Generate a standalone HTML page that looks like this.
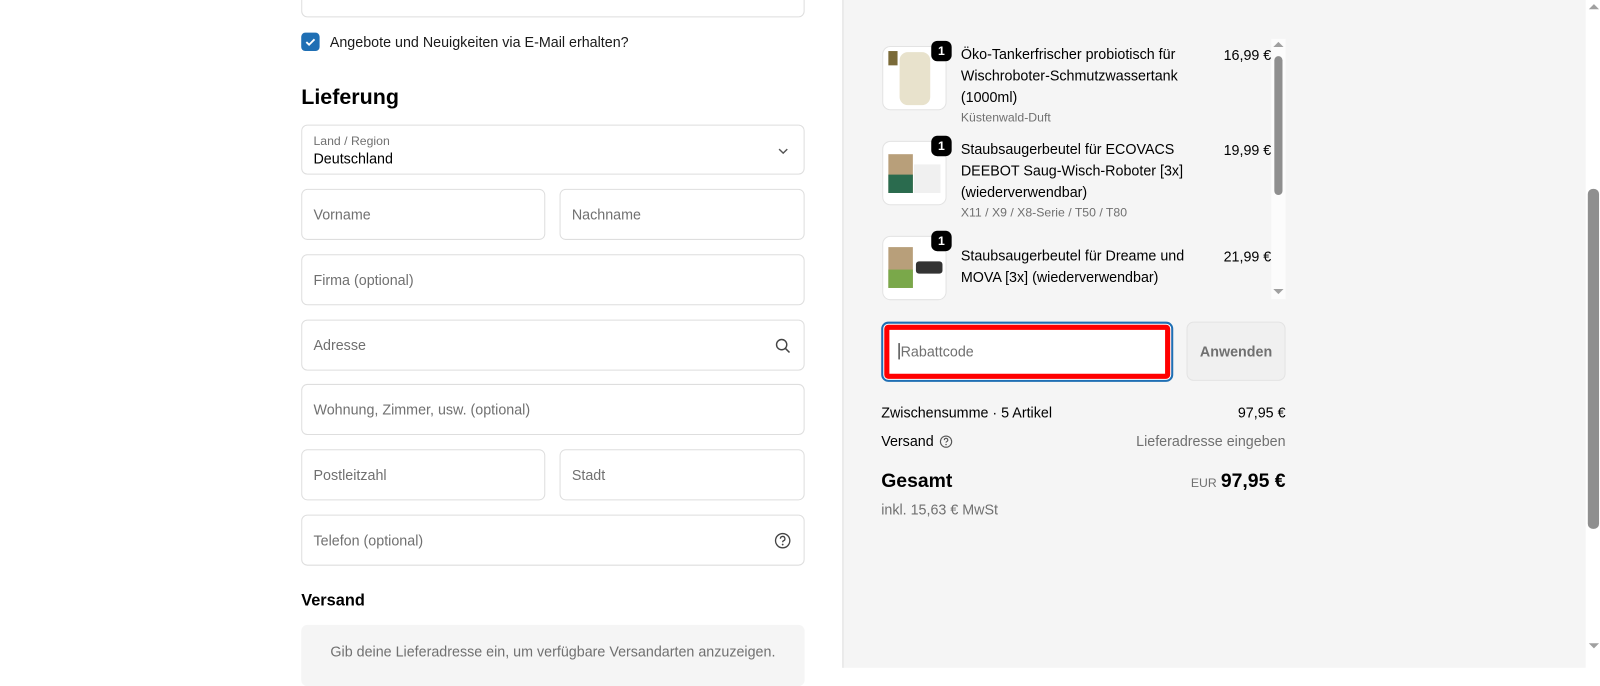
<!DOCTYPE html>
<html><head><meta charset="utf-8">
<style>
*{box-sizing:border-box;margin:0;padding:0}
html,body{width:1600px;height:654px;overflow:hidden;background:#fff}
#wrap{position:absolute;left:0;top:0;width:1567px;height:641px;transform:scale(1.0211);transform-origin:0 0;font-family:"Liberation Sans",sans-serif;color:#000}
.abs{position:absolute}
.field{position:absolute;border:1px solid #dedede;border-radius:6px;background:#fff;font-size:14px;color:#707070;padding-left:11px;display:flex;align-items:center}
.right{position:absolute;left:825px;top:0;width:728px;height:654px;background:#f5f5f5;border-left:1px solid #dedede}
.thumb{position:absolute;left:864px;width:63px;height:63px;border-radius:8px;background:#fff;border:1px solid #e3e3e3;overflow:hidden}
.badge{position:absolute;width:20px;height:20px;border-radius:6px;background:#000;color:#fff;font-size:12px;font-weight:bold;text-align:center;line-height:20px}
.pt{position:absolute;left:941px;font-size:14px;line-height:21px;width:250px}
.pr{position:absolute;left:1160px;width:85px;text-align:right;font-size:14px}
.sub{font-size:12px;color:#707070;line-height:18px}
</style></head><body><div id="wrap">
<div class="field" style="left:295px;top:-30px;width:493px;height:47px"></div>
<div class="abs" style="left:295px;top:32px;width:18px;height:18px;border-radius:4px;background:#1f6fb4"><svg width="18" height="18"><path d="M5 9.2l2.7 2.6L13 6.5" stroke="#fff" stroke-width="1.8" fill="none"/></svg></div>
<div class="abs" style="left:323px;top:33px;font-size:14px;color:#1a1a1a">Angebote und Neuigkeiten via E-Mail erhalten?</div>
<div class="abs" style="left:295px;top:84px;font-size:21px;font-weight:bold">Lieferung</div>
<div class="field" style="left:295px;top:122px;width:493px;height:49px;display:block;padding-top:8px">
 <div style="font-size:12px;color:#707070">Land / Region</div>
 <div style="font-size:14px;color:#000;margin-top:2px">Deutschland</div>
 <svg class="abs" style="right:14px;top:19px" width="12" height="12"><path d="M2 4l4 4 4-4" stroke="#555" stroke-width="1.4" fill="none"/></svg>
</div>
<div class="field" style="left:295px;top:185px;width:239px;height:50px">Vorname</div>
<div class="field" style="left:548px;top:185px;width:240px;height:50px">Nachname</div>
<div class="field" style="left:295px;top:249px;width:493px;height:50px">Firma (optional)</div>
<div class="field" style="left:295px;top:313px;width:493px;height:50px">Adresse
 <svg class="abs" style="right:12px;top:17px" width="16" height="16"><circle cx="6.5" cy="6.5" r="5" stroke="#444" stroke-width="1.4" fill="none"/><path d="M10.2 10.2l4 4" stroke="#444" stroke-width="1.5"/></svg></div>
<div class="field" style="left:295px;top:376px;width:493px;height:50px">Wohnung, Zimmer, usw. (optional)</div>
<div class="field" style="left:295px;top:440px;width:239px;height:50px">Postleitzahl</div>
<div class="field" style="left:548px;top:440px;width:240px;height:50px">Stadt</div>
<div class="field" style="left:295px;top:504px;width:493px;height:50px">Telefon (optional)
 <svg class="abs" style="right:12px;top:16px" width="17" height="17"><circle cx="8.5" cy="8.5" r="7" stroke="#444" stroke-width="1.3" fill="none"/><path d="M6.3 6.6a2.2 2.2 0 1 1 3 2c-.6.3-.8.7-.8 1.4" stroke="#444" stroke-width="1.3" fill="none"/><circle cx="8.5" cy="12.3" r=".9" fill="#444"/></svg></div>
<div class="abs" style="left:295px;top:580px;font-size:16px;font-weight:bold">Versand</div>
<div class="abs" style="left:295px;top:612px;width:493px;height:60px;background:#f5f5f5;border-radius:6px;font-size:14px;color:#707070;text-align:center;padding-top:18px">Gib deine Lieferadresse ein, um verfügbare Versandarten anzuzeigen.</div>
<div class="right"></div>
<div class="thumb" style="top:45px"><div class="abs" style="left:16px;top:5px;width:30px;height:52px;border-radius:8px;background:#e8e2cc"></div><div class="abs" style="left:5px;top:4px;width:9px;height:14px;background:#7a6a38"></div></div>
<div class="thumb" style="top:138px"><div class="abs" style="left:5px;top:12px;width:24px;height:38px;background:#b89f7a"></div><div class="abs" style="left:5px;top:32px;width:24px;height:18px;background:#2a6b4e"></div><div class="abs" style="left:30px;top:22px;width:26px;height:28px;background:#f0f0f0"></div></div>
<div class="thumb" style="top:231px"><div class="abs" style="left:5px;top:10px;width:24px;height:40px;background:#b89f7a"></div><div class="abs" style="left:5px;top:32px;width:24px;height:18px;background:#7aa84a"></div><div class="abs" style="left:32px;top:24px;width:26px;height:12px;background:#333;border-radius:3px"></div></div>
<div class="badge" style="left:912px;top:40px">1</div>
<div class="badge" style="left:912px;top:133px">1</div>
<div class="badge" style="left:912px;top:226px">1</div>
<div class="pt" style="top:43px">Öko-Tankerfrischer probiotisch für Wischroboter-Schmutzwassertank (1000ml)<div class="sub">Küstenwald-Duft</div></div>
<div class="pr" style="top:46px">16,99 €</div>
<div class="pt" style="top:136px">Staubsaugerbeutel für ECOVACS DEEBOT Saug-Wisch-Roboter [3x] (wiederverwendbar)<div class="sub">X11 / X9 / X8-Serie / T50 / T80</div></div>
<div class="pr" style="top:139px">19,99 €</div>
<div class="pt" style="top:240px">Staubsaugerbeutel für Dreame und MOVA [3x] (wiederverwendbar)</div>
<div class="pr" style="top:243px">21,99 €</div>
<div class="abs" style="left:1245px;top:38px;width:14px;height:255px;background:#fcfcfc"></div>
<div class="abs" style="left:1248px;top:55px;width:8px;height:136px;border-radius:4px;background:#8f8f8f"></div>
<div class="abs" style="left:1247px;top:41px;border:5px solid transparent;border-bottom:5px solid #a0a0a0;border-top:0"></div>
<div class="abs" style="left:1247px;top:283px;border:5px solid transparent;border-top:5px solid #a0a0a0;border-bottom:0"></div>
<div class="abs" style="left:863px;top:315px;width:286px;height:59px;border:2px solid #1f6fb4;border-radius:7px;background:#fff"><div style="position:absolute;inset:1px;border:5px solid #ff0000;border-radius:4px"></div><div class="abs" style="left:15px;top:19px;font-size:14px;color:#707070"><span style="border-left:1px solid #000;margin-right:1px"></span>Rabattcode</div></div>
<div class="abs" style="left:1162px;top:315px;width:97px;height:58px;border:1px solid #e3e3e3;border-radius:7px;background:#f0f0f0;font-size:14px;font-weight:bold;color:#707070;text-align:center;line-height:56px">Anwenden</div>
<div class="abs" style="left:863px;top:396px;font-size:14px">Zwischensumme · 5 Artikel</div>
<div class="abs" style="left:1100px;width:159px;text-align:right;top:396px;font-size:14px">97,95 €</div>
<div class="abs" style="left:863px;top:424px;font-size:14px">Versand <svg style="vertical-align:-2px;margin-left:2px" width="13" height="13"><circle cx="6.5" cy="6.5" r="5.5" stroke="#555" stroke-width="1.1" fill="none"/><path d="M4.8 5a1.7 1.7 0 1 1 2.3 1.5c-.5.2-.6.5-.6 1" stroke="#555" stroke-width="1.1" fill="none"/><circle cx="6.5" cy="9.4" r=".7" fill="#555"/></svg></div>
<div class="abs" style="left:1050px;width:209px;text-align:right;top:424px;font-size:14px;color:#707070">Lieferadresse eingeben</div>
<div class="abs" style="left:863px;top:461px;font-size:19px;font-weight:bold">Gesamt</div>
<div class="abs" style="left:1080px;width:179px;text-align:right;top:461px;font-size:19px;font-weight:bold"><span style="font-size:12px;font-weight:normal;color:#707070;margin-right:4px">EUR</span>97,95 €</div>
<div class="abs" style="left:863px;top:491px;font-size:14px;color:#707070">inkl. 15,63 € MwSt</div>
<div class="abs" style="left:1553px;top:0;width:15px;height:654px;background:#fff"></div>
<div class="abs" style="left:1555px;top:185px;width:11px;height:333px;border-radius:5px;background:#8f8f8f"></div>
<div class="abs" style="left:1556px;top:4px;border:5px solid transparent;border-bottom:5px solid #a0a0a0;border-top:0"></div>
<div class="abs" style="left:1556px;top:630px;border:5px solid transparent;border-top:5px solid #a0a0a0;border-bottom:0"></div>
</div></body></html>
